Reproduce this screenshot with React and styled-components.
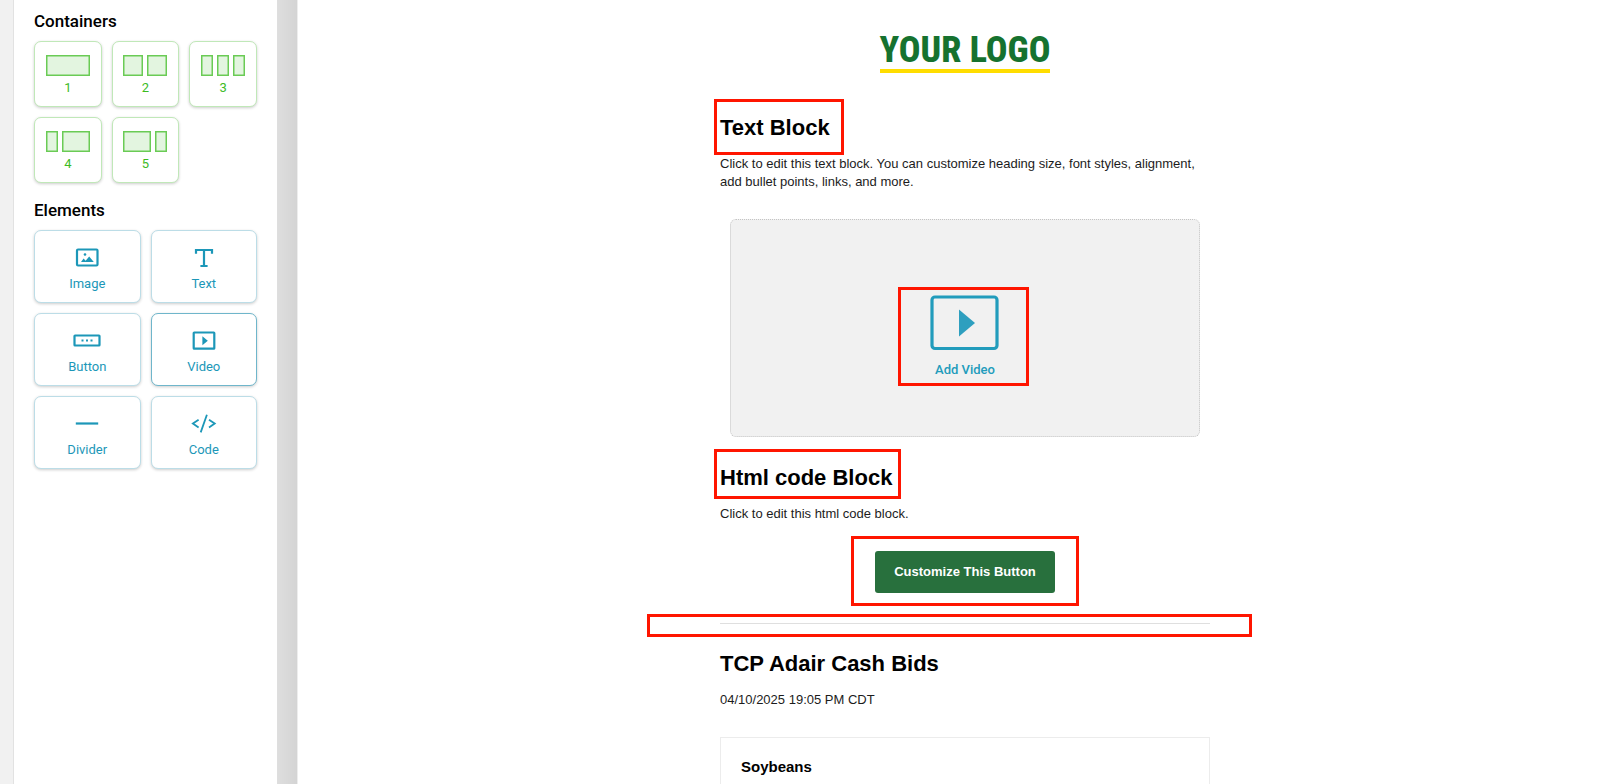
import React from 'react';
import styled, { createGlobalStyle } from 'styled-components';

const GlobalStyle = createGlobalStyle`
  * {
    box-sizing: border-box;
  }

  body {
    margin: 0;
    background: #ffffff;
    color: #000000;
    font-family: Roboto, sans-serif;
  }
`;

const Layout = styled.div`
  display: flex;
  height: 100vh;
  overflow: hidden;
`;

const Rail = styled.div`
  flex: 0 0 14px;
  background: #f1f1f1;
  border-right: 1px solid #e2e2e2;
`;

const Sidebar = styled.aside`
  flex: 0 0 263px;
  padding: 11px 20px;
`;

const Gutter = styled.div`
  flex: 0 0 21px;
  background: linear-gradient(to right, #dedede, #d4d4d4);
  border-right: 1px solid #ededed;
`;

const Group = styled.section`
  margin-bottom: 17px;
`;

const GroupTitle = styled.h2`
  margin: 0 0 10px;
  font-size: 17px;
  font-weight: 500;
  line-height: 20px;
`;

const Grid = styled.div`
  display: grid;
  grid-template-columns: repeat(${({ $columns }) => $columns}, 1fr);
  gap: 10px;
`;

const Tile = styled.button`
  display: flex;
  flex-direction: column;
  align-items: center;
  justify-content: center;
  gap: 4px;
  padding: 2px 0 0;
  background: #ffffff;
  border: 1px solid;
  border-radius: 7px;
  box-shadow: 0 1px 3px rgba(0, 0, 0, 0.2);
  font-family: inherit;
  font-size: 13px;
  line-height: 16px;
  cursor: grab;
`;

const ContainerTile = styled(Tile)`
  height: 66px;
  border-color: #c0e8b8;
  color: #3dbb1f;
`;

const ElementTile = styled(Tile)`
  height: 73px;
  border-color: ${({ $active }) => ($active ? '#6fb6cb' : '#bcdde7')};
  color: #1c97b8;
`;

const Canvas = styled.main`
  flex: 1;
  padding: 28px 0 40px 32px;
  overflow: hidden auto;
  scrollbar-width: none;
`;

const Email = styled.div`
  max-width: 490px;
  margin: 0 auto;
  font-family: 'Liberation Sans', Arial, sans-serif;
`;

const Logo = styled.div`
  width: fit-content;
  margin: 0 auto 40px;
  padding-top: 3px;
  border-bottom: 4px solid #ffdd00;
  color: #16722f;
  font-family: 'Roboto Condensed', 'Liberation Sans Narrow', 'DejaVu Sans Condensed', sans-serif;
  font-size: 36px;
  font-weight: 800;
  line-height: 38px;
`;

const Heading = styled.h1`
  margin: 0;
  font-size: 22px;
  font-weight: 700;
  line-height: 30px;
`;

const Paragraph = styled.p`
  margin: 12px 0 28px;
  color: #1c1c1c;
  font-size: 13px;
  line-height: 18px;
`;

// Wraps a block and draws the red callout frame around it
const Marked = styled.div`
  position: relative;
  width: ${({ $wide }) => ($wide ? 'auto' : 'fit-content')};

  &::after {
    content: '';
    position: absolute;
    inset: ${({ $inset }) => $inset};
    border: 3px solid #ff1500;
    pointer-events: none;
  }
`;

const VideoBox = styled.div`
  display: flex;
  align-items: center;
  justify-content: center;
  height: 218px;
  margin: 0 10px 26px;
  padding-top: 3px;
  background: #f1f1f1;
  border: 1px dotted #c4c4c4;
  border-radius: 6px;
`;

const AddVideo = styled.button`
  display: flex;
  flex-direction: column;
  align-items: center;
  padding: 0;
  background: none;
  border: 0;
  color: #229cbc;
  font-family: Roboto, sans-serif;
  font-size: 13px;
  font-weight: 500;
  line-height: 16px;
  cursor: pointer;
`;

const ButtonRow = styled.div`
  display: flex;
  justify-content: center;
`;

const ActionButton = styled.button`
  display: block;
  padding: 12px 19px;
  background: #28703d;
  border: 0;
  border-radius: 3px;
  color: #ffffff;
  font-family: inherit;
  font-size: 13px;
  font-weight: 700;
  line-height: 18px;
  cursor: pointer;
`;

const Divider = styled.hr`
  height: 1px;
  margin: 30px 0 25px;
  background: #dfdfdf;
  border: 0;
`;

const BidCard = styled.section`
  min-height: 120px;
  padding: 19px 20px;
  border: 1px solid #ececec;
`;

const BidTitle = styled.h2`
  margin: 0;
  font-size: 15px;
  font-weight: 700;
  line-height: 20px;
`;

const containers = [
  { label: '1', columns: [[0, 44]] },
  { label: '2', columns: [[0, 20], [24, 20]] },
  { label: '3', columns: [[0, 12], [16, 12], [32, 12]] },
  { label: '4', columns: [[0, 12], [16, 28]] },
  { label: '5', columns: [[0, 28], [32, 12]] },
];

const ColumnsIcon = ({ columns }) => (
  <svg width="44" height="21" viewBox="0 0 44 21" aria-hidden="true">
    {columns.map(([x, width]) => (
      <rect key={x} x={x + 0.75} y="0.75" width={width - 1.5} height="19.5" fill="#e3f5e0" stroke="#6acb55" strokeWidth="1.5" />
    ))}
  </svg>
);

const Icon = ({ children }) => (
  <svg width="28" height="28" viewBox="0 0 28 28" fill="none" stroke="currentColor" strokeWidth="2.2" aria-hidden="true">
    {children}
  </svg>
);

const ImageIcon = () => (
  <Icon>
    <rect x="4" y="5.5" width="20.5" height="16" rx="1" />
    <path d="M8 18l2.6-3.5 2 2.2 3.6-4.2 4.6 5.5z" fill="currentColor" stroke="none" />
    <circle cx="12" cy="10.5" r="1.3" fill="currentColor" stroke="none" />
  </Icon>
);

const TextIcon = () => (
  <Icon>
    <path d="M6 9.8V6h16v3.8M14 6v16M10.4 22h7.2" />
  </Icon>
);

const ButtonIcon = () => (
  <Icon>
    <rect x="1.5" y="8.5" width="25" height="10" rx="0.5" />
    <path d="M8.5 13.5h2M13 13.5h2M17.5 13.5h2" strokeWidth="2" />
  </Icon>
);

const VideoIcon = () => (
  <Icon>
    <rect x="3.7" y="5.5" width="20.6" height="16.2" rx="0.5" />
    <path d="M12.4 9.2v9l5.4-4.5z" fill="currentColor" stroke="none" />
  </Icon>
);

const DividerIcon = () => (
  <Icon>
    <path d="M2.8 13.5h22.4" />
  </Icon>
);

const CodeIcon = () => (
  <Icon>
    <path d="M8.6 9.8L2.9 13.6l5.7 3.8M19 9.8l5.7 3.8-5.7 3.8M16.9 4.8l-6.2 17.6" strokeWidth="1.8" />
  </Icon>
);

const elements = [
  { label: 'Image', icon: ImageIcon },
  { label: 'Text', icon: TextIcon },
  { label: 'Button', icon: ButtonIcon },
  { label: 'Video', icon: VideoIcon, active: true },
  { label: 'Divider', icon: DividerIcon },
  { label: 'Code', icon: CodeIcon },
];

const App = () => {
  return (
    <Layout>
      <GlobalStyle />
      <Rail />
      <Sidebar>
        <Group>
          <GroupTitle>Containers</GroupTitle>
          <Grid $columns={3}>
            {containers.map(({ label, columns }) => (
              <ContainerTile key={label} type="button">
                <ColumnsIcon columns={columns} />
                {label}
              </ContainerTile>
            ))}
          </Grid>
        </Group>
        <Group>
          <GroupTitle>Elements</GroupTitle>
          <Grid $columns={2}>
            {elements.map(({ label, icon: ElementIcon, active }) => (
              <ElementTile key={label} type="button" $active={active}>
                <ElementIcon />
                {label}
              </ElementTile>
            ))}
          </Grid>
        </Group>
      </Sidebar>
      <Gutter />
      <Canvas>
        <Email>
          <Logo>YOUR LOGO</Logo>

          <Marked $inset="-14px -14px -12px -6px">
            <Heading>Text Block</Heading>
          </Marked>
          <Paragraph>
            Click to edit this text block. You can customize heading size, font styles, alignment, add bullet points, links, and more.
          </Paragraph>

          <VideoBox>
            <Marked $inset="5px -24px -8px -27px">
              <AddVideo type="button">
                <svg width="80" height="80" viewBox="0 0 80 80" aria-hidden="true">
                  <rect x="7" y="15" width="65" height="51.5" rx="3" fill="none" stroke="currentColor" strokeWidth="3.2" />
                  <path d="M34 27.5v27l16-13.5z" fill="#2e9fbf" />
                </svg>
                Add Video
              </AddVideo>
            </Marked>
          </VideoBox>

          <Marked $inset="-14px -9px -6px -6px">
            <Heading>Html code Block</Heading>
          </Marked>
          <Paragraph>Click to edit this html code block.</Paragraph>

          <ButtonRow>
            <Marked $inset="-15px -24px -13px">
              <ActionButton type="button">Customize This Button</ActionButton>
            </Marked>
          </ButtonRow>

          <Marked $wide $inset="-9px -42px -13px -73px">
            <Divider />
          </Marked>

          <Heading>TCP Adair Cash Bids</Heading>
          <Paragraph>04/10/2025 19:05 PM CDT</Paragraph>

          <BidCard>
            <BidTitle>Soybeans</BidTitle>
          </BidCard>
        </Email>
      </Canvas>
    </Layout>
  );
};

export default App;
